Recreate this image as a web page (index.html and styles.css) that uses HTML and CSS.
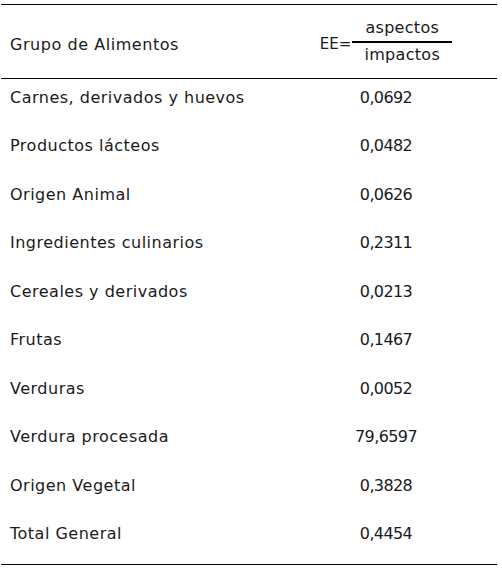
FILE: index.html
```html
<!DOCTYPE html>
<html lang="es">
<head>
<meta charset="utf-8">
<title>Eficiencia ecológica por grupo de alimentos</title>
<link rel="stylesheet" href="styles.css">
</head>
<body>
<div class="wrap">
  <table class="ee-table">
    <thead>
      <tr>
        <th class="col-name">Grupo de Alimentos</th>
        <th class="col-val">
          <div class="formula">
            <span class="formula-lhs">EE=</span>
            <span class="frac">
              <span class="frac-num">aspectos</span>
              <span class="frac-den">impactos</span>
            </span>
          </div>
        </th>
      </tr>
    </thead>
    <tbody>
      <tr><td class="name">Carnes, derivados y huevos</td><td class="val">0,0692</td></tr>
      <tr><td class="name">Productos lácteos</td><td class="val">0,0482</td></tr>
      <tr><td class="name">Origen Animal</td><td class="val">0,0626</td></tr>
      <tr><td class="name">Ingredientes culinarios</td><td class="val">0,2311</td></tr>
      <tr><td class="name">Cereales y derivados</td><td class="val">0,0213</td></tr>
      <tr><td class="name">Frutas</td><td class="val">0,1467</td></tr>
      <tr><td class="name">Verduras</td><td class="val">0,0052</td></tr>
      <tr><td class="name">Verdura procesada</td><td class="val">79,6597</td></tr>
      <tr><td class="name">Origen Vegetal</td><td class="val">0,3828</td></tr>
      <tr><td class="name">Total General</td><td class="val">0,4454</td></tr>
    </tbody>
  </table>
</div>
</body>
</html>
```

FILE: styles.css
```css
html, body {
  margin: 0;
  padding: 0;
  background: #ffffff;
}

body {
  font-family: "DejaVu Sans", "Liberation Sans", sans-serif;
  font-size: 16px;
  color: #1a1a20;
}

.wrap {
  padding: 4px 5px 0 1px;
}

.ee-table {
  width: 496px;
  border-collapse: collapse;
  border-spacing: 0;
  table-layout: fixed;
  border-top: 1px solid #000;
  border-bottom: 1px solid #000;
}

.ee-table thead tr {
  border-bottom: 1px solid #000;
}

.ee-table th {
  font-weight: normal;
  padding: 0;
  height: 73px;
  vertical-align: top;
  line-height: 20px;
}

.col-name {
  width: 274px;
  text-align: left;
  padding-left: 9px !important;
  padding-top: 30px !important;
  box-sizing: border-box;
  letter-spacing: 0.55px;
}

.col-val {
  text-align: center;
}

.formula {
  display: flex;
  justify-content: center;
  align-items: flex-start;
  padding-top: 15px;
}

.formula-lhs {
  font-size: 15px;
  line-height: 15px;
  letter-spacing: 0;
  margin-top: 17px;
  margin-right: 1px;
}

.frac {
  display: flex;
  flex-direction: column;
  align-items: stretch;
  width: 100px;
  line-height: 16px;
  letter-spacing: 0.3px;
}

.frac-num {
  padding-bottom: 5px;
  border-bottom: 2px solid #000;
}

.frac-den {
  padding-top: 4px;
}

.ee-table td {
  padding: 8.5px 0 20px 0;
  line-height: 20px;
  vertical-align: top;
}

.name {
  padding-left: 9px !important;
  letter-spacing: 0.5px;
}

.val {
  text-align: center;
  letter-spacing: -0.6px;
}
```
